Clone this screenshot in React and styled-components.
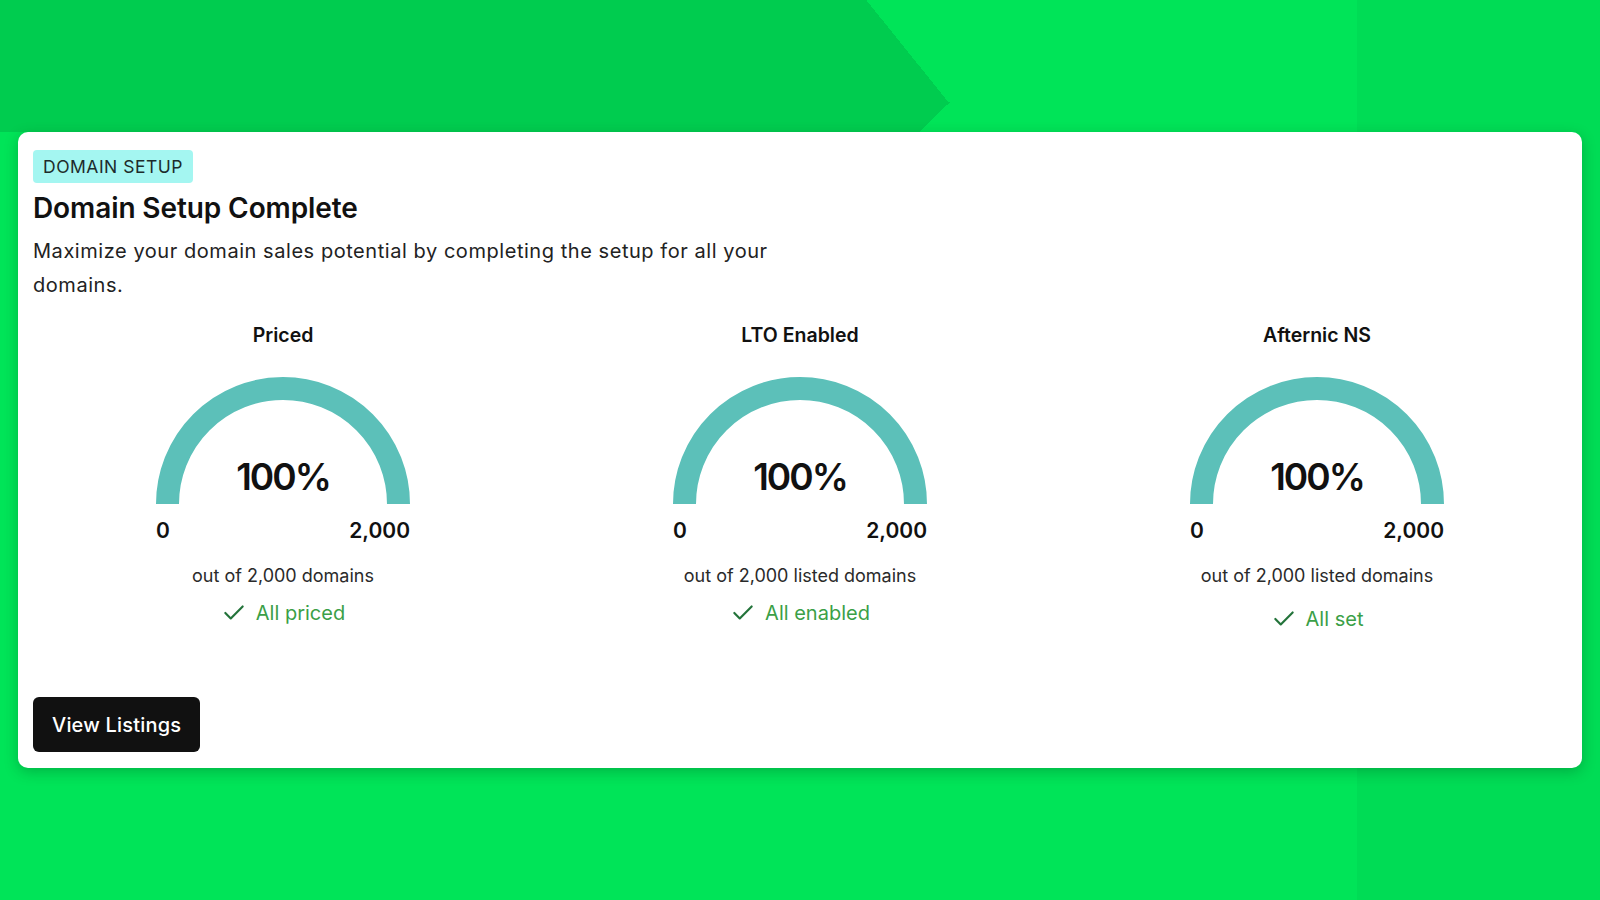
import React from "react";
import styled, { createGlobalStyle } from "styled-components";
import { Check } from "lucide-react";

const GlobalStyle = createGlobalStyle`
  html, body {
    margin: 0;
    padding: 0;
  }
  body {
    min-height: 900px;
    font-family: "Inter", "Noto Sans", sans-serif;
    color: #111;
    background-color: #00e458;
    background-image:
      linear-gradient(51.2deg, #00cc4f 739px, transparent 739px),
      linear-gradient(136deg, #00cc4f 660px, transparent 660px),
      linear-gradient(90deg, transparent 1357px, rgba(0, 0, 0, 0.035) 1357px);
    background-size: 1600px 102px, 1600px 30px, 100% 100%;
    background-position: 0 0, 0 102px, 0 0;
    background-repeat: no-repeat;
  }
`;

const Page = styled.div`
  padding: 132px 18px 0 18px;
`;

const Card = styled.section`
  background: #fff;
  border-radius: 10px;
  box-shadow: 0 4px 14px rgba(0, 60, 20, 0.28);
  padding: 18px 15px 16px 15px;
`;

const Badge = styled.span`
  display: inline-block;
  background: #a4f6f1;
  color: #1d2b2b;
  font-size: 17.5px;
  line-height: 33px;
  padding: 0 10px;
  border-radius: 4px;
  letter-spacing: 0.5px;
`;

const Title = styled.h1`
  margin: 7px 0 0 0;
  font-size: 28px;
  line-height: 36px;
  font-weight: 600;
  letter-spacing: -0.1px;
`;

const Description = styled.p`
  margin: 8px 0 0 0;
  max-width: 775px;
  font-size: 20px;
  line-height: 34px;
  letter-spacing: 0.55px;
  color: #222;
`;

const GaugeGrid = styled.div`
  display: grid;
  grid-template-columns: repeat(3, 1fr);
  column-gap: 17px;
  margin-top: 19px;
`;

const Gauge = styled.div`
  display: flex;
  flex-direction: column;
  align-items: center;
`;

const GaugeTitle = styled.h3`
  margin: 0;
  font-size: 19.5px;
  line-height: 28px;
  font-weight: 600;
`;

const Dial = styled.div`
  position: relative;
  width: 254px;
  height: 127px;
  margin-top: 28px;
`;

const Percent = styled.span`
  position: absolute;
  left: 0;
  right: 0;
  top: 80px;
  text-align: center;
  font-size: 37px;
  line-height: 40px;
  font-weight: 600;
  letter-spacing: -2px;
`;

const Scale = styled.div`
  width: 254px;
  display: flex;
  justify-content: space-between;
  margin-top: 14px;
  font-size: 21px;
  line-height: 26px;
  font-weight: 600;
`;

const Caption = styled.div`
  margin-top: 20px;
  font-size: 18px;
  line-height: 24px;
  color: #2a2a2a;
`;

const Status = styled.div`
  display: flex;
  align-items: center;
  gap: 9px;
  margin-top: ${(p) => p.$offset || 12}px;
  font-size: 20px;
  line-height: 26px;
  color: #3b9f47;
  svg {
    color: #23733a;
  }
`;

const Footer = styled.div`
  margin-top: 65px;
`;

const Button = styled.button`
  background: #111;
  color: #fff;
  border: none;
  border-radius: 6px;
  height: 55px;
  padding: 0 19px;
  font-family: inherit;
  font-size: 20px;
  font-weight: 500;
  letter-spacing: 0.2px;
  cursor: pointer;
`;

const ARC = "M 11.5 127 A 115.5 115.5 0 0 1 242.5 127";

const gauges = [
  { title: "Priced", caption: "out of 2,000 domains", status: "All priced" },
  { title: "LTO Enabled", caption: "out of 2,000 listed domains", status: "All enabled" },
  { title: "Afternic NS", caption: "out of 2,000 listed domains", status: "All set", offset: 18 },
];

const GaugeCard = ({ title, caption, status, offset }) => (
  <Gauge>
    <GaugeTitle>{title}</GaugeTitle>
    <Dial>
      <svg width="254" height="127" viewBox="0 0 254 127">
        <path d={ARC} fill="none" stroke="#5cc0b9" strokeWidth="23" />
      </svg>
      <Percent>100%</Percent>
    </Dial>
    <Scale>
      <span>0</span>
      <span>2,000</span>
    </Scale>
    <Caption>{caption}</Caption>
    <Status $offset={offset}>
      <Check size={26} strokeWidth={2} />
      <span>{status}</span>
    </Status>
  </Gauge>
);

export default function App() {
  return (
    <>
      <GlobalStyle />
      <Page>
        <Card>
          <Badge>DOMAIN SETUP</Badge>
          <Title>Domain Setup Complete</Title>
          <Description>
            Maximize your domain sales potential by completing the setup for all your domains.
          </Description>
          <GaugeGrid>
            {gauges.map((g) => (
              <GaugeCard key={g.title} {...g} />
            ))}
          </GaugeGrid>
          <Footer>
            <Button>View Listings</Button>
          </Footer>
        </Card>
      </Page>
    </>
  );
}
